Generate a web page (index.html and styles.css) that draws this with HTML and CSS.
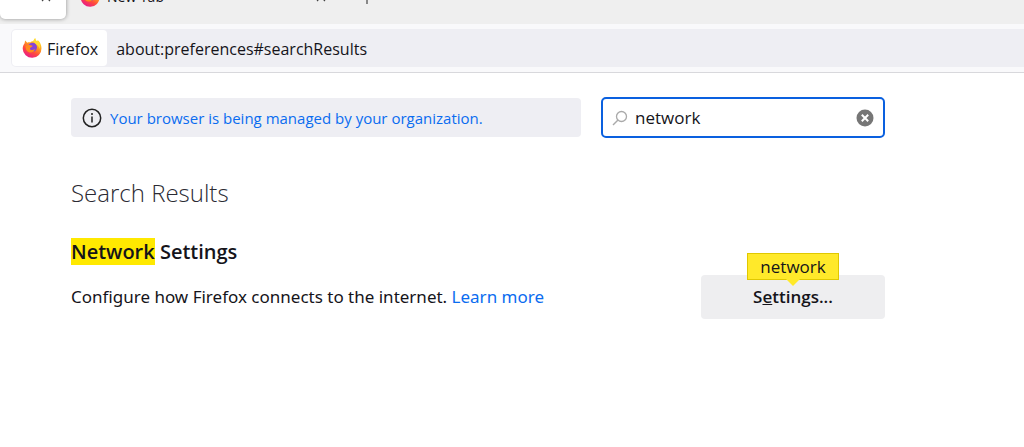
FILE: index.html
```html
<!DOCTYPE html>
<html lang="en">
<head>
  <meta charset="UTF-8">
  <meta name="viewport" content="width=device-width, initial-scale=1.0">
  <title>Settings</title>
  <link rel="stylesheet" href="styles.css">
</head>
<body>
  <!-- shared icons -->
  <svg class="defs" width="0" height="0" aria-hidden="true">
    <defs>
      <linearGradient id="fire" x1="0.8" y1="0.1" x2="0.3" y2="1">
        <stop offset="0" stop-color="#ffe226"/>
        <stop offset="0.35" stop-color="#ff9a1f"/>
        <stop offset="0.65" stop-color="#ff4a3d"/>
        <stop offset="1" stop-color="#e8198b"/>
      </linearGradient>
      <symbol id="firefox" viewBox="0 0 20 20">
        <path fill="url(#fire)" d="M2.600 5.200C2.700 4 3 3.200 3.600 2.600c.3 1 .9 1.600 1.700 2.100 1-.4 2-.5 3-.3C9.200 3.500 10.500 3.200 11.500 3.300c.2-1.400.8-2.500 1.800-3.100 0 1.500.700 2.400 1.700 3.300.4-.3.700-.700.8-1.200 2.300 1.900 3.700 4.700 3.700 8a9.400 9.200 0 0 1-18.800.5c0-2.100.7-4 1.900-5.600z"/>
        <circle cx="10.500" cy="9.300" r="4.500" fill="#8545d8"/>
        <path fill="#ff8a1e" d="M3.500 8c1.800-1.200 3.800-1.200 5.200-.7.700.3 1.200.5 1.900.5-.2 1.100-1.300 1.400-2.300 1.900-.5.400-.5 1.100 0 1.700 1.100 1 3.200.7 4.600-.4-.5 2.700-2.800 3.800-5 3.500C5.200 14.100 3.500 11.500 3.500 8z"/>
        <path fill="#ffdc35" d="M13.300.2c0 1.500.7 2.400 1.700 3.300.4-.3.700-.7.8-1.200 2 2 2.900 5 2 8.700-.6-1.800-1.600-3.400-3.300-4.600-1.200-.8-2.400-1.500-3-3.100.2-1.400.8-2.500 1.800-3.100z"/>
      </symbol>
      <symbol id="cross" viewBox="0 0 10 10">
        <path d="M1 1l8 8M9 1l-8 8" fill="none" stroke="#444" stroke-width="1.200"/>
      </symbol>
    </defs>
  </svg>

  <header class="toolbox">
    <div class="tabs">
      <div class="tab active">
        <button class="tab-btn" aria-label="Close tab"><svg width="10" height="10"><use href="#cross"/></svg></button>
      </div>
      <div class="tab">
        <svg width="20" height="20"><use href="#firefox"/></svg>
        <span class="tab-label">New Tab</span>
        <button class="tab-btn" aria-label="Close tab"><svg width="10" height="10"><use href="#cross"/></svg></button>
      </div>
      <button class="tab-btn new-tab" aria-label="New tab">
        <svg width="14" height="14" viewBox="0 0 14 14"><path d="M7 0v14M0 7h14" stroke="#444" stroke-width="1.200"/></svg>
      </button>
    </div>
    <div class="nav-bar">
      <div class="urlbar">
        <button class="identity">
          <svg width="20" height="20"><use href="#firefox"/></svg>
          <span>Firefox</span>
        </button>
        <input class="url" type="text" aria-label="Address" value="about:preferences#searchResults">
      </div>
    </div>
  </header>

  <main class="content">
    <div class="top-row">
      <div class="notice">
        <svg width="20" height="20" viewBox="0 0 20 20">
          <circle cx="10" cy="10" r="8.700" fill="none" stroke="#222" stroke-width="1.500"/>
          <circle cx="10" cy="6" r="1" fill="#222"/>
          <path d="M10 8.500v6" stroke="#222" stroke-width="1.500"/>
        </svg>
        <a href="#policies">Your browser is being managed by your organization.</a>
      </div>
      <div class="search">
        <svg width="16" height="16" viewBox="0 0 16 16">
          <circle cx="9.500" cy="6.500" r="5" fill="none" stroke="#aaa" stroke-width="1.300"/>
          <path d="M6 10l-5 5" stroke="#aaa" stroke-width="1.400"/>
        </svg>
        <input type="text" aria-label="Find in Settings" value="network">
        <button class="clear" aria-label="Clear">
          <svg width="18" height="18" viewBox="0 0 18 18">
            <circle cx="9" cy="9" r="8.500" fill="#767676"/>
            <path d="M5.800 5.800l6.400 6.400M12.200 5.800l-6.400 6.400" stroke="#fff" stroke-width="2"/>
          </svg>
        </button>
      </div>
    </div>

    <h1>Search Results</h1>
    <h2><mark>Network</mark> Settings</h2>

    <div class="setting">
      <p>Configure how Firefox connects to the internet. <a href="#learn">Learn more</a></p>
      <div class="action">
        <button class="settings-btn" accesskey="e">S<u>e</u>ttings...</button>
        <span class="tooltip">network</span>
      </div>
    </div>
  </main>
</body>
</html>
```
FILE: styles.css
```css
* {
  box-sizing: border-box;
}

body {
  margin: 0;
  background: #fff;
  color: #15141a;
  font-family: "Open Sans", "Noto Sans", sans-serif;
  font-size: 16px;
  line-height: 24px;
}

button, input {
  font: inherit;
  color: inherit;
  border: none;
  padding: 0;
  background: none;
}

input {
  outline: none;
  min-width: 0;
  flex: 1;
}

a {
  color: #0a6cf0;
  text-decoration: none;
}

svg {
  display: block;
  flex: none;
}

.defs {
  position: absolute;
}

/* browser chrome */
.toolbox {
  background: #f9f9fb;
  border-bottom: 1px solid #d8d8dc;
}

.tabs {
  display: flex;
  align-items: flex-end;
  height: 24px;
  overflow: hidden;
  background: #efefef;
}

.tab {
  display: flex;
  align-items: center;
  width: 264px;
  height: 44px;
  margin-bottom: 5px;
  padding: 0 4px 0 14px;
}

.tab.active {
  justify-content: flex-end;
  width: 66px;
  padding-right: 15px;
  background: #fff;
  border-radius: 5px;
  box-shadow: 0 0 4px rgba(0, 0, 0, 0.4);
}

.tab-label {
  flex: 1;
  margin-left: 7px;
  font-size: 14px;
}

.new-tab {
  margin: 0 0 20px 30px;
}

.nav-bar {
  padding: 5px 0 5px 11px;
}

.urlbar {
  display: flex;
  height: 38px;
  padding: 1px;
  background: #eeeef3;
  border-radius: 5px 0 0 5px;
}

.identity {
  display: flex;
  align-items: center;
  gap: 5px;
  margin-right: 9px;
  padding: 0 9px 0 10px;
  background: #fff;
  border-radius: 4px;
}

.identity span, .url {
  padding-top: 2px;
}

/* page */
.content {
  max-width: 885px;
  padding: 24px 0 0 71px;
}

.top-row {
  display: flex;
  align-items: center;
  gap: 20px;
}

.notice {
  display: flex;
  align-items: center;
  flex: 1;
  gap: 8px;
  height: 39px;
  padding: 0 11px;
  background: #eeeef3;
  border-radius: 4px;
  font-size: 15px;
}

.search {
  display: flex;
  align-items: center;
  width: 284px;
  height: 41px;
  padding: 0 9px;
  border: 2px solid #0a60df;
  border-radius: 5px;
}

.search input {
  margin-left: 7px;
  font-size: 17px;
}

h1 {
  margin: 37px 0 27px;
  color: #2b2a33;
  font-size: 24px;
  font-weight: 300;
  line-height: 36px;
}

h2 {
  margin: 0 0 9px;
  font-size: 20px;
  font-weight: 600;
  line-height: 28px;
}

mark {
  background: #ffe900;
  color: inherit;
}

.setting {
  display: flex;
  align-items: center;
  justify-content: space-between;
}

.setting p {
  margin: 0;
  font-family: "Noto Sans", sans-serif;
  font-size: 17px;
}

.action {
  position: relative;
  width: 184px;
}

.settings-btn {
  width: 100%;
  height: 44px;
  background: #eeeef0;
  border-radius: 4px;
  font-size: 17px;
  font-weight: 600;
}

/* search match bubble over the button */
.tooltip {
  position: absolute;
  left: 50%;
  bottom: 39px;
  width: 92px;
  margin-left: -46px;
  border: 1px solid #e0c800;
  background: #ffe92a;
  text-align: center;
  font-size: 17px;
  line-height: 25px;
}

.tooltip::after {
  content: "";
  position: absolute;
  top: 100%;
  left: 50%;
  margin-left: -7px;
  border: 7px solid transparent;
  border-top-color: #ffe92a;
  border-bottom: none;
}
```
